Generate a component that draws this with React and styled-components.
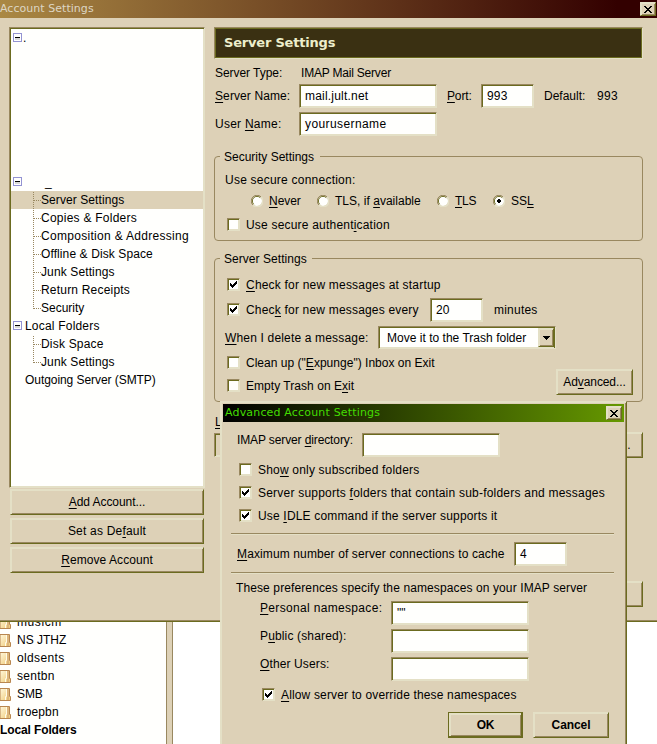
import React from "react";
import styled, { createGlobalStyle, css } from "styled-components";

const c = {
  face: "#ddd1b7",
  light: "#e4e0c6",
  shadow: "#998860",
  dark: "#6b6b1f",
  field: "#fffffd",
};

const GlobalStyle = createGlobalStyle`
  * { box-sizing: border-box; }
  html, body { margin: 0; padding: 0; }
  body {
    width: 657px;
    height: 744px;
    overflow: hidden;
    background: #fff;
    color: #000;
    font: 12px/18px "Liberation Sans", Arial, sans-serif;
  }
`;

const sunken = css`
  border: 1px solid;
  border-color: ${c.shadow} ${c.light} ${c.light} ${c.shadow};
  box-shadow: inset 1px 1px 0 ${c.dark}, inset -1px -1px 0 ${c.light};
`;

const raised = css`
  border: 1px solid;
  border-color: ${c.light} ${c.dark} ${c.dark} ${c.light};
  box-shadow: inset 1px 1px 0 ${c.light}, inset -1px -1px 0 ${c.shadow};
`;

const Screen = styled.div`
  position: relative;
  width: 657px;
  height: 744px;
  overflow: hidden;
  display: flex;
  flex-direction: column;
`;

const Window = styled.section`
  height: 622px;
  flex: none;
  background: ${c.face};
  border-bottom: 1px solid ${c.dark};
  box-shadow: inset 0 -1px 0 ${c.shadow};
`;

const TitleBar = styled.header`
  height: 18px;
  display: flex;
  align-items: center;
  justify-content: space-between;
  padding: 0 ${(p) => p.$end ?? 1}px 0 ${(p) => p.$indent || 0}px;
  background: ${(p) => p.$fill};
  color: ${(p) => p.$ink};
  font: 11px/18px "DejaVu Sans", Verdana, sans-serif;
  letter-spacing: ${(p) => p.$ls || 0}px;
  white-space: nowrap;
`;

const CloseBox = styled.button`
  width: 16px;
  height: 14px;
  padding: 0;
  display: grid;
  place-items: center;
  background: ${c.face};
  ${raised}
`;

const WindowBody = styled.div`
  display: flex;
  padding: 9px 14px 0 9px;
`;

const Sidebar = styled.div`
  width: 196px;
  flex: none;
  display: flex;
  flex-direction: column;
`;

const Tree = styled.div`
  height: 461px;
  padding: 1px;
  margin-bottom: 1px;
  background: ${c.field};
  ${sunken}
`;

const TreeRow = styled.div`
  height: 18px;
  display: flex;
  align-items: center;
  padding-left: ${(p) => (p.$child ? 22 : 2)}px;
  margin-top: ${(p) => p.$gap || 0}px;
  background: ${(p) => (p.$selected ? c.face : "transparent")};
`;

const Branch = styled.svg`
  flex: none;
  width: 8px;
  height: 18px;
`;

const Expander = styled.svg`
  flex: none;
  width: 9px;
  height: 9px;
  margin: 0 3px 1px 0;
`;

const Text = styled.span`
  white-space: pre;
  flex: none;
  letter-spacing: ${(p) => p.$ls ?? 0.2}px;
  width: ${(p) => (p.$w ? p.$w + "px" : "auto")};
  margin-left: ${(p) => p.$ml || 0}px;
  font-weight: ${(p) => (p.$bold ? 700 : 400)};
  padding-bottom: ${(p) => p.$up || 0}px;
`;

const Key = styled.u`
  text-decoration: underline;
  text-decoration-thickness: 1px;
  text-underline-offset: 2px;
  text-decoration-skip-ink: none;
`;

const Button = styled.button`
  width: ${(p) => p.$w}px;
  height: 26px;
  margin: ${(p) => p.$m || "0"};
  padding: 0;
  flex: none;
  background: ${c.face};
  color: #000;
  font: ${(p) => (p.$bold ? 700 : 400)} 12px/18px "Liberation Sans", Arial, sans-serif;
  text-align: center;
  ${raised}
  ${(p) =>
    p.$primary &&
    css`
      border-color: ${c.dark};
      box-shadow: inset -1px -1px 0 ${c.dark}, inset 2px 2px 0 ${c.light}, inset -2px -2px 0 ${c.shadow};
    `}
`;

const Panel = styled.main`
  width: 430px;
  margin-left: 9px;
  display: flex;
  flex-direction: column;
`;

const Heading = styled.h1`
  margin: 0;
  width: 429px;
  height: 32px;
  padding-left: 9px;
  background: #3a3012;
  color: #eceecb;
  border: 1px solid;
  border-color: ${c.shadow} ${c.light} ${c.light} ${c.shadow};
  box-shadow: inset 0 0 0 1px ${c.dark};
  font: 700 13px/30px "DejaVu Sans", Verdana, sans-serif;
  letter-spacing: ${(p) => p.$ls}px;
`;

const Row = styled.div`
  display: flex;
  align-items: ${(p) => p.$align || "center"};
  height: ${(p) => p.$h || 18}px;
  width: ${(p) => (p.$w ? p.$w + "px" : "auto")};
  margin-top: ${(p) => p.$mt || 0}px;
  padding-left: ${(p) => p.$pl || 0}px;
`;

const Field = styled.div`
  width: ${(p) => p.$w || 138}px;
  height: 24px;
  flex: none;
  padding-left: 5px;
  line-height: 22px;
  background: ${(p) => (p.$off ? c.face : c.field)};
  ${sunken}
`;

const Group = styled.fieldset`
  width: 429px;
  height: ${(p) => p.$h}px;
  margin: ${(p) => p.$mt}px 0 0;
  padding: 0 0 0 10px;
  border: 1px solid ${c.shadow};
  border-radius: 4px;
  min-width: 0;
`;

const Legend = styled.div`
  width: ${(p) => p.$w}px;
  height: 18px;
  margin: -9px 0 0 -5px;
  padding-left: 4px;
  background: ${c.face};
`;

const Box = styled.span`
  width: 13px;
  height: 13px;
  margin: 0 6px 1px 0;
  flex: none;
  display: grid;
  place-items: center;
  background: ${c.field};
  ${sunken}
`;

const RadioIcon = styled.svg`
  width: 12px;
  height: 12px;
  flex: none;
  margin-right: 6px;
`;

const Select = styled.div`
  width: 178px;
  height: 23px;
  padding: 1px 1px 1px 8px;
  display: flex;
  justify-content: space-between;
  align-items: center;
  background: ${c.field};
  border: 1px solid;
  border-color: ${c.shadow} ${c.light} ${c.light} ${c.shadow};
  box-shadow: inset 1px 1px 0 ${c.dark}, inset -1px 0 0 ${c.dark}, inset 0 -1px 0 ${c.light};
  flex: none;
`;

const SelectArrow = styled.span`
  width: 16px;
  height: 19px;
  display: grid;
  place-items: center;
  background: ${c.face};
  ${raised}
`;

const Dialog = styled.section`
  position: absolute;
  left: 220px;
  top: 401px;
  width: 407px;
  height: 350px;
  padding: 2px 2px 0 2px;
  background: ${c.face};
  border: 1px solid;
  border-color: ${c.light} ${c.dark} ${c.dark} ${c.light};
  box-shadow: inset 1px 1px 0 ${c.light}, inset -1px 0 0 ${c.shadow};
`;

const Rule = styled.hr`
  width: 383px;
  height: 2px;
  margin: ${(p) => p.$mt}px 0 0 8px;
  border: 0;
  background: ${c.light};
  border-top: 1px solid ${c.shadow};
`;

const Actions = styled.div`
  display: flex;
  gap: 10px;
  margin: 8px 0 0 225px;
`;

const Background = styled.div`
  flex: 1;
  display: flex;
  background: #fff;
  overflow: hidden;
`;

const FolderList = styled.div`
  width: 166px;
  margin-top: -9px;
  background: ${c.field};
`;

const FolderRow = styled.div`
  height: 18px;
  display: flex;
  align-items: center;
`;

const Splitter = styled.div`
  width: 7px;
  background: ${c.face};
  border: solid ${c.shadow};
  border-width: 0 1px;
`;

const CloseMark = () => (
  <svg width="8" height="7" viewBox="0 0 8 7" shapeRendering="crispEdges">
    <path d="M0 0h2v1h-2zM6 0h2v1h-2zM1 1h2v1h-2zM5 1h2v1h-2zM2 2h4v1h-4zM3 3h2v1h-2zM2 4h4v1h-4zM1 5h2v1h-2zM5 5h2v1h-2zM0 6h2v1h-2zM6 6h2v1h-2z" />
  </svg>
);

const Check = ({ on }) => (
  <Box>
    {on && (
      <svg width="7" height="7" viewBox="0 0 7 7" shapeRendering="crispEdges">
        <path d="M0 2h1v3h-1zM1 3h1v3h-1zM2 4h1v3h-1zM3 3h1v3h-1zM4 2h1v3h-1zM5 1h1v3h-1zM6 0h1v3h-1z" />
      </svg>
    )}
  </Box>
);

const Radio = ({ on }) => (
  <RadioIcon viewBox="0 0 12 12">
    <circle cx="6" cy="6" r="5" fill={c.field} />
    <path d="M1.9 10.1A5.6 5.6 0 0 1 10.1 1.9" fill="none" stroke={c.shadow} />
    <path d="M2.7 9.3A4.6 4.6 0 0 1 9.3 2.7" fill="none" stroke={c.dark} />
    <path d="M1.9 10.1A5.6 5.6 0 0 0 10.1 1.9" fill="none" stroke={c.light} strokeWidth="1.5" />
    {on && <path shapeRendering="crispEdges" d="M5 4h2v1h1v2h-1v1h-2v-1h-1v-2h1z" />}
  </RadioIcon>
);

const Minus = () => (
  <Expander viewBox="0 0 9 9" shapeRendering="crispEdges">
    <rect x=".5" y=".5" width="8" height="8" fill="#fff" stroke="#9393d2" />
    <rect x="2" y="5" width="5" height="2" fill="#d8d8d8" />
    <rect x="2" y="4" width="5" height="1" fill="#000" />
  </Expander>
);

const Lines = ({ last }) => (
  <Branch viewBox="0 0 8 18" shapeRendering="crispEdges">
    <path d={`M.5 1V${last ? 10 : 18}M1 9.5H8`} stroke={c.shadow} strokeDasharray="1 1" fill="none" />
  </Branch>
);

const Folder = () => (
  <svg width="12" height="15" viewBox="0 0 12 15">
    <defs>
      <linearGradient id="folderFill" x1="0" y1="0" x2="1" y2="1">
        <stop offset="0" stopColor="#fff8dc" />
        <stop offset="1" stopColor="#efc873" />
      </linearGradient>
    </defs>
    <path d="M0 1.5H9.5V9.5H10.5V13.5H0z" fill="url(#folderFill)" stroke="#b88650" />
    <path d="M6.5 2V9.5H5.5V13" fill="none" stroke="#fffbe8" />
    <path d="M8 2V13" fill="none" stroke="#dcb67c" strokeWidth="2" />
  </svg>
);

const serverPages = [
  ["Server Settings", 0.08],
  ["Copies & Folders", 0.25],
  ["Composition & Addressing", 0.3],
  ["Offline & Disk Space", 0.1],
  ["Junk Settings", 0.12],
  ["Return Receipts", 0.2],
  ["Security", 0],
];
const folders = [
  ["musicm", 0.6],
  ["NS JTHZ", 0],
  ["oldsents", 0.35],
  ["sentbn", 0.27],
  ["SMB", -0.1],
  ["troepbn", 0.15],
];

export default function App() {
  return (
    <Screen>
      <GlobalStyle />
      <Window>
        <TitleBar $fill="linear-gradient(90deg,#aa8844,#330000 94%)" $ink="#ddd6c4" $ls={0.04}>
          Account Settings
          <CloseBox><CloseMark /></CloseBox>
        </TitleBar>
        <WindowBody>
          <Sidebar>
            <Tree>
              <TreeRow><Minus /><Text $ml={-2}>.</Text></TreeRow>
              <TreeRow $gap={126}><Minus /><Text $ml={20} $ls={0}>_</Text></TreeRow>
              {serverPages.map(([name, ls], i) => (
                <TreeRow key={name} $child $selected={i === 0}>
                  <Lines last={i === serverPages.length - 1} />
                  <Text $ls={ls}>{name}</Text>
                </TreeRow>
              ))}
              <TreeRow><Minus /><Text $ls={0.2}>Local Folders</Text></TreeRow>
              <TreeRow $child><Lines /><Text $ls={0.2}>Disk Space</Text></TreeRow>
              <TreeRow $child><Lines last /><Text $ls={0.12}>Junk Settings</Text></TreeRow>
              <TreeRow><Text $ml={12} $ls={-0.06}>Outgoing Server (SMTP)</Text></TreeRow>
            </Tree>
            <Button $w={194} $m="0 0 3px 1px"><Text $ls={-0.06}><Key>A</Key>dd Account...</Text></Button>
            <Button $w={194} $m="0 0 3px 1px"><Text $ls={0.2}>Set as De<Key>f</Key>ault</Text></Button>
            <Button $w={194} $m="0 0 0 1px"><Text $ls={0.07}><Key>R</Key>emove Account</Text></Button>
          </Sidebar>
          <Panel>
            <Heading $ls={-0.2}>Server Settings</Heading>
            <Row $mt={5} $pl={1}><Text $w={86} $ls={-0.05}>Server Type:</Text><Text $ls={-0.2}>IMAP Mail Server</Text></Row>
            <Row $mt={2} $h={24} $pl={1}>
              <Text $w={84} $ls={0.1}><Key>S</Key>erver Name:</Text>
              <Field><Text $ls={0.2}>mail.jult.net</Text></Field>
              <Text $ml={10} $w={34} $ls={-0.15}><Key>P</Key>ort:</Text>
              <Field $w={53}><Text $ls={0.2}>993</Text></Field>
              <Text $ml={10} $w={53} $ls={0}>Default:</Text><Text $ls={0.35}>993</Text>
            </Row>
            <Row $mt={4} $h={24} $pl={1}>
              <Text $w={84} $ls={0.25}>User <Key>N</Key>ame:</Text>
              <Field><Text $ls={0.4}>yourusername</Text></Field>
            </Row>
            <Group $mt={20} $h={85}>
              <Legend $w={100}><Text $ls={0}>Security Settings</Text></Legend>
              <Row $mt={5}><Text $ls={0.23}>Use secure connection:</Text></Row>
              <Row $mt={3} $pl={26}>
                <Radio /><Text $w={48} $ls={-0.05}><Key>N</Key>ever</Text>
                <Radio /><Text $w={102} $ls={0.02}>TLS, if <Key>a</Key>vailable</Text>
                <Radio /><Text $w={38} $ls={-0.3}><Key>T</Key>LS</Text>
                <Radio on /><Text $ls={0}>SS<Key>L</Key></Text>
              </Row>
              <Row $mt={6} $pl={2}><Check /><Text $ls={0.2}>Use secure authent<Key>i</Key>cation</Text></Row>
            </Group>
            <Group $mt={17} $h={144}>
              <Legend $w={92}><Text $ls={0.05}>Server Settings</Text></Legend>
              <Row $mt={8} $pl={2}><Check on /><Text $ls={0.2}><Key>C</Key>heck for new messages at startup</Text></Row>
              <Row $mt={4} $h={24} $pl={2}>
                <Check on /><Text $w={184} $ls={0.19}>Chec<Key>k</Key> for new messages every</Text>
                <Field $w={53}><Text>20</Text></Field><Text $ml={11} $ls={0.22}>minutes</Text>
              </Row>
              <Row $mt={4} $h={23}>
                <Text $w={153} $ls={0.17}><Key>W</Key>hen I delete a message:</Text>
                <Select>
                  <Text $ls={0.02}>Move it to the Trash folder</Text>
                  <SelectArrow>
                    <svg width="7" height="4" viewBox="0 0 7 4" shapeRendering="crispEdges"><path d="M0 0h7v1h-7zM1 1h5v1h-5zM2 2h3v1h-3zM3 3h1v1h-1z" /></svg>
                  </SelectArrow>
                </Select>
              </Row>
              <Row $mt={5} $pl={2}><Check /><Text $ls={0.02}>Clean up ("<Key>E</Key>xpunge") Inbox on Exit</Text></Row>
              <Row $h={26} $mt={-3} $pl={2} $align="flex-end">
                <Row $w={329}><Check /><Text $ls={0.04}>Empty Trash on E<Key>x</Key>it</Text></Row>
                <Button $w={77}><Text $ls={-0.1}>Ad<Key>v</Key>anced...</Text></Button>
              </Row>
            </Group>
            <Row $mt={11} $pl={1}><Text><Key>L</Key></Text></Row>
            <Row $mt={1} $h={26}><Field $off $w={300} /><Button $w={77} $m="0 0 0 52px"><Text $ls={0.3}>Browse...</Text></Button></Row>
            <Row $mt={123} $h={26} $pl={352}><Button $w={77} /></Row>
          </Panel>
        </WindowBody>
      </Window>
      <Background>
        <FolderList>
          {folders.map(([name, ls]) => (
            <FolderRow key={name}><Folder /><Text $ml={5} $ls={ls}>{name}</Text></FolderRow>
          ))}
          <FolderRow><Text $bold $ls={-0.12}>Local Folders</Text></FolderRow>
        </FolderList>
        <Splitter />
      </Background>
      <Dialog>
        <TitleBar $fill="linear-gradient(90deg,#000,#669900)" $ink="#44dd00" $indent={2} $end={2} $ls={0.17}>
          Advanced Account Settings
          <CloseBox><CloseMark /></CloseBox>
        </TitleBar>
        <Row $mt={9} $h={28} $pl={14}><Text $w={125} $up={10} $ls={-0.12}>IMAP server <Key>d</Key>irectory:</Text><Field /></Row>
        <Row $mt={2} $pl={16}><Check /><Text $ls={0.19}>Sho<Key>w</Key> only subscribed folders</Text></Row>
        <Row $mt={5} $pl={16}><Check on /><Text $ls={0.22}>Server supports <Key>f</Key>olders that contain sub-folders and messages</Text></Row>
        <Row $mt={5} $pl={16}><Check on /><Text $ls={0.17}>Use <Key>I</Key>DLE command if the server supports it</Text></Row>
        <Rule $mt={8} />
        <Row $mt={7} $h={24} $pl={14}><Text $w={277} $ls={0.12}><Key>M</Key>aximum number of server connections to cache</Text><Field $w={53}><Text>4</Text></Field></Row>
        <Rule $mt={6} />
        <Row $mt={5} $pl={13}><Text $ls={0.11}>These preferences specify the namespaces on your IMAP server</Text></Row>
        <Row $mt={4} $h={24} $pl={37}><Text $w={131} $up={11} $ls={0.33}><Key>P</Key>ersonal namespace:</Text><Field><Text $ls={0}>""</Text></Field></Row>
        <Row $mt={4} $h={24} $pl={37}><Text $w={131} $up={11} $ls={0.15}>P<Key>u</Key>blic (shared):</Text><Field /></Row>
        <Row $mt={4} $h={24} $pl={37}><Text $w={131} $up={11} $ls={0.12}><Key>O</Key>ther Users:</Text><Field /></Row>
        <Row $mt={5} $pl={39}><Check on /><Text $ls={0.15}><Key>A</Key>llow server to override these namespaces</Text></Row>
        <Actions>
          <Button $w={75} $bold $primary><Text $bold $ls={-0.2}>OK</Text></Button>
          <Button $w={76} $bold><Text $bold $ls={-0.1}>Cancel</Text></Button>
        </Actions>
      </Dialog>
    </Screen>
  );
}
